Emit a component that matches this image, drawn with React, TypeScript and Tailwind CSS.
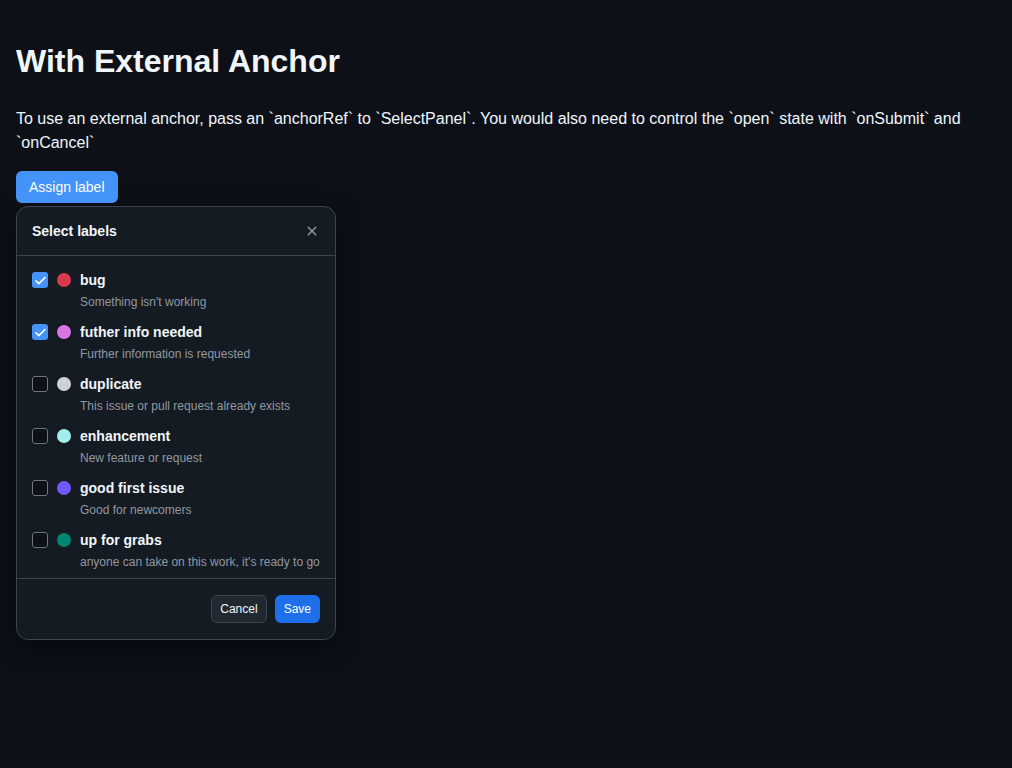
import { useState } from 'react'

type Label = { id: string; name: string; description: string; color: string }

const labels: Label[] = [
  { id: 'bug', name: 'bug', description: "Something isn't working", color: '#d73a4a' },
  { id: 'info', name: 'futher info needed', description: 'Further information is requested', color: '#d876e3' },
  { id: 'dup', name: 'duplicate', description: 'This issue or pull request already exists', color: '#cfd3d7' },
  { id: 'enh', name: 'enhancement', description: 'New feature or request', color: '#a2eeef' },
  { id: 'gfi', name: 'good first issue', description: 'Good for newcomers', color: '#7057ff' },
  { id: 'ufg', name: 'up for grabs', description: "anyone can take on this work, it's ready to go", color: '#008672' },
]

function Checkbox({ checked }: { checked: boolean }) {
  return checked ? (
    <span className="flex h-4 w-4 shrink-0 items-center justify-center rounded-[3px] bg-[#4493f8]">
      <svg width="13" height="13" viewBox="0 0 16 16" fill="none">
        <path d="M2.5 8.5l3.5 3.3L13.5 4.3" stroke="white" strokeWidth="2" strokeLinecap="round" strokeLinejoin="round" />
      </svg>
    </span>
  ) : (
    <span className="h-4 w-4 shrink-0 rounded-[3px] border border-[#6e7681] bg-[#0d1117]" />
  )
}

export default function App() {
  const [selected, setSelected] = useState<string[]>(['bug', 'info'])

  const toggle = (id: string) =>
    setSelected((prev) => (prev.includes(id) ? prev.filter((x) => x !== id) : [...prev, id]))

  return (
    <div className="min-h-screen bg-[#0d1117] px-4 pt-[41px] font-['Liberation_Sans',Arial,sans-serif] text-[#f0f6fc]">
      <h1 className="text-[32px] font-bold leading-10">With External Anchor</h1>
      <p className="mt-[26px] text-base leading-6 text-[#f0f6fc]">
        To use an external anchor, pass an `anchorRef` to `SelectPanel`. You would also need to control the `open` state with `onSubmit` and `onCancel`
      </p>

      <button className="mt-[16px] h-8 rounded-md bg-[#4493f8] px-[13px] text-sm text-white">Assign label</button>

      <div className="mt-[3px] w-[320px] rounded-xl border border-[#3d444d] bg-[#151b23] shadow-[0_8px_24px_rgba(1,4,9,0.6)]">
        <div className="flex h-[49px] items-center justify-between border-b border-[#3d444d] pl-[15px] pr-[7px]">
          <h2 className="text-sm font-bold text-[#f0f6fc]">Select labels</h2>
          <button className="flex h-8 w-8 items-center justify-center text-[#9198a1]">
            <svg width="16" height="16" viewBox="0 0 16 16" fill="currentColor">
              <path d="M3.72 3.72a.75.75 0 0 1 1.06 0L8 6.94l3.22-3.22a.749.749 0 0 1 1.275.326.749.749 0 0 1-.215.734L9.06 8l3.22 3.22a.749.749 0 0 1-.326 1.275.749.749 0 0 1-.734-.215L8 9.06l-3.22 3.22a.751.751 0 0 1-1.042-.018.751.751 0 0 1-.018-1.042L6.94 8 3.72 4.78a.75.75 0 0 1 0-1.06Z" />
            </svg>
          </button>
        </div>

        <ul className="pt-2 pb-[2px]">
          {labels.map((label) => (
            <li
              key={label.id}
              className="flex cursor-pointer gap-[9px] px-[15px] py-1.5"
              onClick={() => toggle(label.id)}
            >
              <div className="flex h-5 items-center gap-[9px]">
                <Checkbox checked={selected.includes(label.id)} />
                <span className="h-[14px] w-[14px] rounded-full" style={{ backgroundColor: label.color }} />
              </div>
              <div className="flex flex-col gap-1">
                <span className="text-sm font-bold leading-5 text-[#f0f6fc]">{label.name}</span>
                <span className="whitespace-nowrap text-xs leading-4 text-[#9198a1]">{label.description}</span>
              </div>
            </li>
          ))}
        </ul>

        <div className="flex justify-end gap-2 border-t border-[#3d444d] px-[15px] py-4">
          <button className="h-7 rounded-md border border-[#3d444d] bg-[#212830] px-2 text-xs text-[#f0f6fc]">Cancel</button>
          <button className="h-7 rounded-md border border-transparent bg-[#1f6feb] px-2 text-xs text-white">Save</button>
        </div>
      </div>
    </div>
  )
}
